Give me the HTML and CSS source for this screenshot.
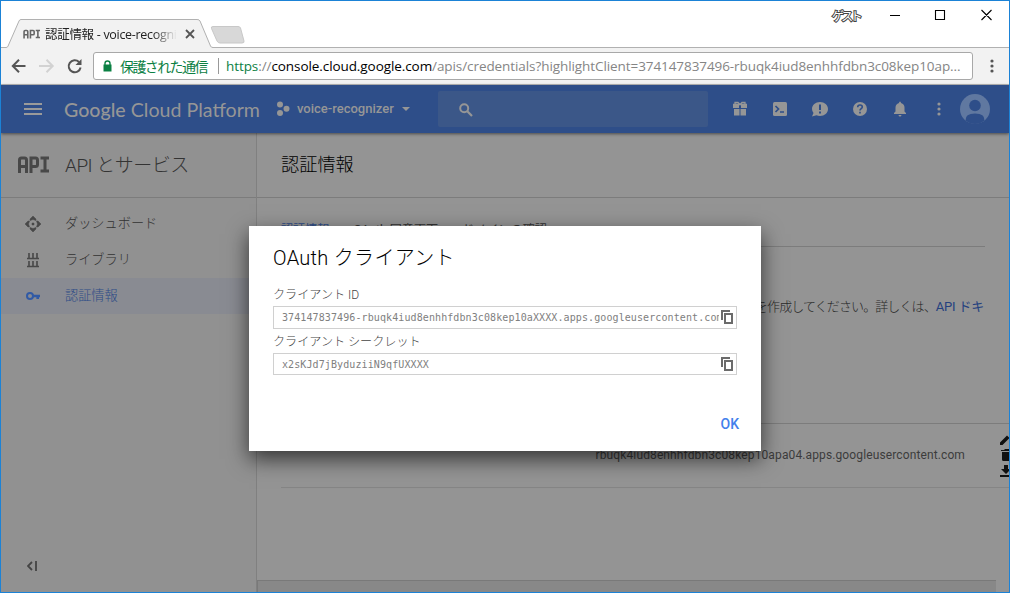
FILE: index.html
```html
<!DOCTYPE html>
<html lang="ja">
<head>
<meta charset="utf-8">
<title>認証情報 - voice-recognizer</title>
<link rel="stylesheet" href="styles.css">
</head>
<body>
<div class="window">
  <div class="tabstrip">
    <div class="tab">
      <svg class="tab-shape" width="212" height="30" viewBox="0 0 212 30"><path d="M0 28.500H5C6.500 28.500 7 27.500 7.500 26L18 2Q18.600.5 20 .5H196Q198.500.5 199 2L209.500 27Q210 28.500 212 28.500V30H0Z" fill="#f2f2f2"/><path d="M0 28.500H5C6.500 28.500 7 27.500 7.500 26L18 2Q18.600.5 20 .5H196Q198.500.5 199 2L209.500 27Q210 28.500 212 28.500" fill="none" stroke="#b1b1b1"/></svg>
      <svg class="api-small" width="17" height="10" viewBox="0 0 32 17"><path d="M2 17V4Q2 2 4 2H7Q9 2 9 4V17M2 10H9M14 17V2H19Q21 2 21 4V8Q21 10 19 10H14M24 2H32M28 2V15M24 15H32" fill="none" stroke="#666" stroke-width="3"/></svg>
      <span class="tab-title">認証情報 - voice-recogni</span>
      <svg class="tab-close" width="10" height="10" viewBox="0 0 10 10"><path d="M1 1L9 9M9 1L1 9" stroke="#555" stroke-width="1.800"/></svg>
    </div>
    <svg class="newtab" width="36" height="20" viewBox="0 0 36 20"><path d="M3 1.500H28Q30 1.500 30.500 3L34 16Q34.500 18 32 18H10Q8 18 7 16L1.500 3.500Q.7 1.500 3 1.500Z" fill="#d8d8d8" stroke="#c8c8c8"/></svg>
    <span class="guest">ゲスト</span>
    <svg class="winbtns" width="104" height="14" viewBox="0 0 104 14"><path d="M0 7.500H10M45.500 2.500H54.500V11.500H45.500ZM91.500 2L101.500 12M101.500 2L91.500 12" fill="none" stroke="#000" stroke-width="1.100"/></svg>
  </div>
  <div class="toolbar">
    <svg class="nav" width="72" height="18" viewBox="0 0 72 18"><path d="M14.500 9H2M8 2.800L1.800 9L8 15.200" fill="none" stroke="#555" stroke-width="2"/><path d="M28 9H41.500M35.500 2.800L41.700 9L35.500 15.200" fill="none" stroke="#d2d2d2" stroke-width="2"/><path d="M68 5A6 6 0 1 0 69.600 10.500" fill="none" stroke="#555" stroke-width="2"/><path d="M70.500 2V8H64.500Z" fill="#555"/></svg>
    <div class="omnibox">
      <svg width="9" height="12" viewBox="0 0 9 12"><path d="M.5 4.500H8.500V11.500H.5Z" fill="#0b8043"/><path d="M2 5V3.200Q2 1 4.500 1T7 3.200V5" fill="none" stroke="#0b8043" stroke-width="1.400"/></svg>
      <span class="secure">保護された通信</span>
      <span class="divider"></span>
      <span class="url"><span class="scheme">https</span>://<span class="host">console.cloud.google.com</span>/apis/credentials?highlightClient=374147837496-rbuqk4iud8enhhfdbn3c08kep10ap...</span>
    </div>
    <svg class="menu" width="4" height="14" viewBox="0 0 4 14"><g fill="#555"><circle cx="2" cy="2" r="1.600"/><circle cx="2" cy="7" r="1.600"/><circle cx="2" cy="12" r="1.600"/></g></svg>
  </div>
  <header class="appbar">
    <svg class="burger" width="18" height="12" viewBox="0 0 18 12"><path d="M0 1H18M0 6H18M0 11H18" stroke="#9a9a9a" stroke-width="2"/></svg>
    <span class="brand"><b>Google</b> Cloud Platform</span>
    <svg class="proj-icon" width="14" height="16" viewBox="0 0 14 16"><g fill="#969696"><circle cx="4" cy="3.600" r="3"/><circle cx="10.500" cy="7.800" r="3"/><circle cx="4" cy="12" r="3"/></g></svg>
    <span class="project">voice-recognizer</span>
    <span class="caret"></span>
    <div class="search"><svg width="14" height="14" viewBox="0 0 14 14"><circle cx="5.200" cy="5.200" r="4" fill="none" stroke="#969696" stroke-width="2"/><path d="M8.300 8.300L13 13" stroke="#969696" stroke-width="2.200"/></svg></div>
    <div class="actions">
      <svg width="16" height="16" viewBox="0 0 16 16"><path d="M1 4H7V7H1ZM9 4H15V7H9ZM2 8H7.500V14.500H2ZM8.500 8H14V14.500H8.500Z" fill="#969696"/><path d="M1 3.500H15M3 3V1.500H6L8 3.500L10 1.500H13V3" fill="none" stroke="#969696" stroke-width="1.300"/></svg>
      <svg width="16" height="16" viewBox="0 0 16 16"><rect x="1" y="1" width="14" height="14" rx="1.500" fill="#969696"/><path d="M3.500 5L6.500 8L3.500 11M8 11H12" fill="none" stroke="#2e4e89" stroke-width="1.700"/></svg>
      <svg width="18" height="16" viewBox="0 0 18 16"><path d="M9 1C13.500 1 17 4 17 8S13.500 15 9 15Q7 15 5.500 14.200L1 15.500L2.500 12Q1 10 1 8C1 4 4.500 1 9 1Z" fill="#969696"/><path d="M9 3.500V9M9 10.500V12.500" stroke="#2e4e89" stroke-width="2"/></svg>
      <svg width="16" height="16" viewBox="0 0 16 16"><circle cx="8" cy="8" r="7" fill="#969696"/><path d="M5.700 6.200Q5.700 4 8 4T10.300 6Q10.300 7 9 7.800Q8 8.500 8 9.500M8 10.800V12.500" fill="none" stroke="#2e4e89" stroke-width="1.600"/></svg>
      <svg width="16" height="16" viewBox="0 0 16 16"><path d="M8 .5Q9 .5 9 2Q12.500 3 12.500 6.500V10.500L14 12V13H2V12L3.500 10.500V6.500Q3.500 3 7 2Q7 .5 8 .5ZM6.500 14H9.500Q9.300 15.500 8 15.500T6.500 14Z" fill="#969696"/></svg>
      <svg width="4" height="14" viewBox="0 0 4 14"><g fill="#969696"><circle cx="2" cy="2" r="1.600"/><circle cx="2" cy="7" r="1.600"/><circle cx="2" cy="12" r="1.600"/></g></svg>
    </div>
    <svg class="avatar" width="30" height="30" viewBox="0 0 30 30"><circle cx="15" cy="15" r="15" fill="#6078a0"/><circle cx="15" cy="11.500" r="5.800" fill="#2e4e89"/><path d="M5.500 26.500Q5 19.500 15 19.500T24.500 26.500Q20 30 15 30T5.500 26.500Z" fill="#2e4e89"/></svg>
  </header>
  <div class="body">
    <nav class="sidebar">
      <div class="side-title">
        <svg width="32" height="17" viewBox="0 0 32 17"><path d="M2.500 17V4Q2.500 2 4.500 2H7.500Q9.500 2 9.500 4V17M2.500 10.500H9.500M14 17V2H18.500Q20.500 2 20.500 4V8.500Q20.500 10.500 18.500 10.500H14M23.500 2H32M28 2V15M23.500 15H32" fill="none" stroke="#484848" stroke-width="3"/></svg>
        <span>API とサービス</span>
      </div>
      <div class="side-items">
        <div class="side-item"><svg width="16" height="16" viewBox="0 0 16 16"><path d="M8 0L11 3V4.500L8 3.500L5 4.500V3ZM8 16L11 13V11.500L8 12.500L5 11.500V13ZM0 8L3 5H4.500L3.500 8L4.500 11H3ZM16 8L13 5H11.500L12.500 8L11.500 11H13ZM7 7H9V9H7Z" fill="#484848" stroke="#484848" stroke-width=".5"/></svg><span>ダッシュボード</span></div>
        <div class="side-item"><svg width="16" height="16" viewBox="0 0 16 16"><path d="M2 6.500H14M2 14.500H14M4 1V6M8 1V6M12 1V6M4 9V14M8 9V14M12 9V14" fill="none" stroke="#484848" stroke-width="1.600"/></svg><span>ライブラリ</span></div>
        <div class="side-item active"><svg width="16" height="16" viewBox="0 0 16 16"><circle cx="5" cy="8" r="3" fill="none" stroke="#315aa5" stroke-width="2"/><path d="M8 8H15M12.700 8V11" stroke="#315aa5" stroke-width="2.600"/></svg><span>認証情報</span></div>
      </div>
      <svg class="collapse" width="10" height="10" viewBox="0 0 10 10"><path d="M5 1L1 5L5 9M9 0V10" fill="none" stroke="#444" stroke-width="1.800"/></svg>
    </nav>
    <main class="content">
      <h1>認証情報</h1>
      <div class="tabs"><span class="current">認証情報</span><span>OAuth 同意画面</span><span>ドメインの確認</span></div>
      <p class="hint">を作成してください。詳しくは、<a>API ドキ</a></p>
      <div class="row">
        <span class="client">rbuqk4iud8enhhfdbn3c08kep10apa04.apps.googleusercontent.com</span>
        <svg width="9" height="46" viewBox="0 0 9 46"><path d="M0 10V7.500L7 .5L9.500 3L2.500 10ZM1 15H4L5 14H9V16H1ZM2 17H9V26H3.500Q2 26 2 24.500ZM4 30H8V34H11L6 39L1 34H4ZM0 40H9V42H0Z" fill="#111"/></svg>
      </div>
      <div class="scrollbar"></div>
    </main>
  </div>
  <section class="dialog">
    <h2>OAuth クライアント</h2>
    <label class="l-id">クライアント ID</label>
    <div class="field"><span>374147837496-rbuqk4iud8enhhfdbn3c08kep10aXXXX.apps.googleusercontent.com</span><svg width="12" height="14" viewBox="0 0 12 14"><path d="M1 10V1H9M4 4H11V13H4Z" fill="none" stroke="#6b6b6b" stroke-width="2"/></svg></div>
    <label class="l-secret">クライアント シークレット</label>
    <div class="field second"><span>x2sKJd7jByduziiN9qfUXXXX</span><svg width="12" height="14" viewBox="0 0 12 14"><path d="M1 10V1H9M4 4H11V13H4Z" fill="none" stroke="#6b6b6b" stroke-width="2"/></svg></div>
    <button>OK</button>
  </section>
</div>
</body>
</html>
```
FILE: styles.css
```css
* { box-sizing: border-box; }
body { margin: 0; background: #fff; font-family: Roboto, "Noto Sans CJK JP", sans-serif; }
svg { flex: none; display: block; }
.window { position: relative; width: 1010px; height: 593px; border: 1px solid #1b82d6; overflow: hidden; display: flex; flex-direction: column; }
.window span { white-space: nowrap; }
.tabstrip { height: 47px; flex: none; display: flex; background: linear-gradient(#b1b1b1, #b1b1b1) 211px 46px / 800px 1px no-repeat; }
.tab { position: relative; width: 209px; height: 29px; margin-top: 18px; display: flex; align-items: center; flex: none; }
.tab-shape { position: absolute; left: 0; top: 0; }
.tab > :not(.tab-shape) { position: relative; }
.api-small { margin-left: 22px; }
.tab-title { margin-left: 5px; width: 131px; font: 12.5px "Open Sans", "Noto Sans CJK JP", sans-serif; letter-spacing: -.3px; color: #222; -webkit-mask: linear-gradient(90deg, #000 108px, transparent 132px); }
.tab-close { margin-left: 9px; }
.newtab { margin-top: 24px; }
.guest { margin: 7px 0 0 586px; width: 30px; font: 12px/16px "Noto Sans CJK JP", sans-serif; letter-spacing: -2.800px; color: #fff; -webkit-text-stroke: 2px #444; paint-order: stroke fill; }
.winbtns { margin: 7px 0 0 28px; }
.toolbar { height: 37px; flex: none; background: #f2f2f2; border-bottom: 1px solid #b9b9b9; display: flex; align-items: center; }
.nav { margin-left: 10px; }
.omnibox { width: 880px; height: 28px; margin-left: 10px; border: 1px solid #a8a8a8; border-radius: 3px; background: #fff; display: flex; align-items: center; padding-left: 9px; font: 13.5px "Open Sans", "Noto Sans CJK JP", sans-serif; color: #858585; flex: none; }
.secure { margin-left: 8px; width: 88px; color: #0b8043; font-size: 14px; letter-spacing: -1.600px; }
.divider { width: 1px; height: 16px; margin-left: 10px; background: #999; }
.url { margin-left: 7px; letter-spacing: -.08px; }
.scheme { color: #0b8043; }
.host { color: #000; }
.menu { margin-left: 17px; }
.appbar { position: relative; z-index: 1; height: 48px; flex: none; background: #2e4e89; box-shadow: 0 1px 3px rgba(0,0,0,.5); display: flex; align-items: center; color: #969696; }
.burger { margin-left: 23px; }
.brand { margin-left: 22px; width: 197px; font: 19.6px Lato, sans-serif; }
.brand b { font-weight: 500; }
.proj-icon { margin-left: 15px; }
.project { margin-left: 7px; width: 98px; font-size: 13px; font-weight: 500; padding-bottom: 1px; }
.caret { margin-left: 7px; border: 4px solid transparent; border-top-color: #969696; border-bottom: 0; }
.search { margin-left: 28px; width: 270px; height: 36px; border-radius: 2px; background: #3b5788; padding: 12px 21px; }
.actions { margin-left: 24px; width: 210px; display: flex; align-items: center; gap: 24px; }
.actions svg:nth-child(3) { margin: 0 -1px; }
.actions svg:last-child { margin-left: 5px; }
.avatar { margin-left: 18px; margin-bottom: 1px; }
.body { flex: 1; display: flex; min-height: 0; }
.sidebar { width: 256px; flex: none; background: #919191; border-right: 1px solid #808080; color: #333; display: flex; flex-direction: column; font-weight: 300; }
.side-title { height: 65px; border-bottom: 1px solid #7c7c7c; display: flex; align-items: center; padding: 0 0 1px 16px; gap: 16px; font-size: 19px; letter-spacing: -.5px; }
.side-title span { padding-bottom: 3px; }
.side-items { padding-top: 8px; }
.side-item { height: 36px; display: flex; align-items: center; padding-left: 24px; gap: 24px; font-size: 13.2px; }
.side-item span { padding-bottom: 4px; }
.side-item.active { background: #898b92; color: #2d4c87; }
.collapse { margin: auto 0 21px 26px; }
.content { flex: 1; background: #949494; display: flex; flex-direction: column; min-width: 0; }
h1 { margin: 0; height: 65px; border-bottom: 1px solid #7c7c7c; padding: 1px 0 0 24px; font-size: 18.2px; line-height: 62px; font-weight: 300; color: #000; flex: none; }
.tabs { height: 49px; margin: 0 24px; border-bottom: 1px solid #7c7c7c; display: flex; gap: 24px; align-items: center; font-size: 12.1px; line-height: 16px; color: #333; padding-top: 15px; flex: none; }
.tabs .current { color: #2d4c87; }
.hint { margin: 50px 25px 0 0; text-align: right; font-size: 13px; font-weight: 300; line-height: 20px; letter-spacing: -.9px; color: #292929; white-space: nowrap; }
.hint a { color: #24417f; font-weight: 400; letter-spacing: -.2px; }
.row { height: 65px; margin: 106px 0 0 24px; border-top: 1px solid #7c7c7c; border-bottom: 1px solid #858585; display: flex; align-items: center; justify-content: flex-end; gap: 35px; font-size: 12px; color: #3c3c3c; }
.client { letter-spacing: .12px; padding-bottom: 2px; }
.row svg { margin-top: 4px; }
.scrollbar { margin-top: auto; height: 12px; width: 739px; background: #888; border-top: 1px solid #797979; border-left: 1px solid #797979; }
.dialog { position: absolute; z-index: 2; left: 248px; top: 225px; width: 512px; height: 225px; background: #fff; box-shadow: 0 8px 20px rgba(0,0,0,.65); padding: 17px 24px; display: flex; flex-direction: column; }
h2 { margin: 0; font-size: 20px; line-height: 30px; font-weight: 300; letter-spacing: .3px; color: #000; }
label { font-size: 12.1px; line-height: 18px; color: #444; font-weight: 300; }
.l-id { margin-top: 13px; }
.l-secret { margin-top: 4px; }
.field { margin-top: 2px; height: 23px; flex: none; border: 1px solid #d0d0d0; display: flex; align-items: center; justify-content: space-between; padding: 0 3px 0 8px; font: 10px "DejaVu Sans Mono", monospace; letter-spacing: .1px; color: #808080; }
.field svg { margin-bottom: 1px; }
.field.second { height: 22px; }
.field.second svg { margin-bottom: 0; }
.field span { flex: 1; overflow: hidden; margin-right: 2px; }
button { align-self: flex-end; margin: 39px -4px 0 0; padding: 0 2px; border: 0; background: none; font: 500 14px/20px Roboto, sans-serif; color: #4280ec; }
```
